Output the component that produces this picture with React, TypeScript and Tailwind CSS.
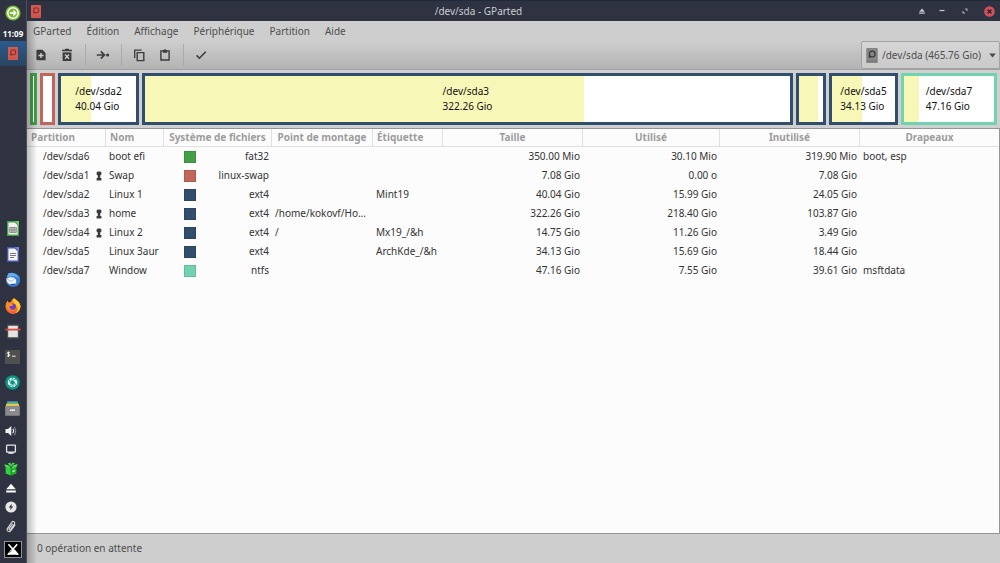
import React from "react";

type Partition = {
  path: string;
  locked?: boolean;
  name: string;
  fs: string;
  color: string;
  mount: string;
  label: string;
  size: string;
  used: string;
  unused: string;
  flags: string;
};

const GREEN = "bg-[#43a047]";
const RED = "bg-[#c1665a]";
const BLUE = "bg-[#314e6c]";
const TEAL = "bg-[#70d2b1]";

const partitions: Partition[] = [
  { path: "/dev/sda6", name: "boot efi", fs: "fat32", color: GREEN, mount: "", label: "", size: "350.00 Mio", used: "30.10 Mio", unused: "319.90 Mio", flags: "boot, esp" },
  { path: "/dev/sda1", locked: true, name: "Swap", fs: "linux-swap", color: RED, mount: "", label: "", size: "7.08 Gio", used: "0.00 o", unused: "7.08 Gio", flags: "" },
  { path: "/dev/sda2", name: "Linux 1", fs: "ext4", color: BLUE, mount: "", label: "Mint19", size: "40.04 Gio", used: "15.99 Gio", unused: "24.05 Gio", flags: "" },
  { path: "/dev/sda3", locked: true, name: "home", fs: "ext4", color: BLUE, mount: "/home/kokovf/Ho...", label: "", size: "322.26 Gio", used: "218.40 Gio", unused: "103.87 Gio", flags: "" },
  { path: "/dev/sda4", locked: true, name: "Linux 2", fs: "ext4", color: BLUE, mount: "/", label: "Mx19_/&h", size: "14.75 Gio", used: "11.26 Gio", unused: "3.49 Gio", flags: "" },
  { path: "/dev/sda5", name: "Linux 3aur", fs: "ext4", color: BLUE, mount: "", label: "ArchKde_/&h", size: "34.13 Gio", used: "15.69 Gio", unused: "18.44 Gio", flags: "" },
  { path: "/dev/sda7", name: "Window", fs: "ntfs", color: TEAL, mount: "", label: "", size: "47.16 Gio", used: "7.55 Gio", unused: "39.61 Gio", flags: "msftdata" },
];

const blocks = [
  { id: "sda6", border: "border-[#43a047]", used: 0, size: "" },
  { id: "sda1", border: "border-[#c1665a]", used: 0, size: "" },
  { id: "sda2", border: "border-[#314e6c]", used: 40, size: "40.04 Gio" },
  { id: "sda3", border: "border-[#314e6c]", used: 68, size: "322.26 Gio" },
  { id: "sda4", border: "border-[#314e6c]", used: 78, size: "" },
  { id: "sda5", border: "border-[#314e6c]", used: 47, size: "34.13 Gio" },
  { id: "sda7", border: "border-[#70d2b1]", used: 17, size: "47.16 Gio" },
];

const DiskIcon = ({ body, ink, w = 10, h = 13 }: { body: string; ink: string; w?: number; h?: number }) => (
  <svg width={w} height={h} viewBox="0 0 10 13" aria-hidden="true">
    <rect width="10" height="13" rx="0.7" fill={body} />
    <circle cx="5.2" cy="5.2" r="2.5" fill="none" stroke={ink} strokeWidth="1.1" />
    <path d="M2.2 8.4V6.2L4.4 8.4Z" fill={ink} />
    <path d="M0 11.4H10" stroke={ink} strokeOpacity="0.2" strokeWidth="0.8" />
  </svg>
);

const Lock = () => (
  <svg width="6" height="10" viewBox="0 0 6 10" fill="#3a3a3a" aria-hidden="true">
    <path d="M1.6 0.5H4.4L5.4 1.5V3.6L4.2 4.6V7H5.4V9.5H0.6V7H1.8V4.6L0.6 3.6V1.5Z" />
  </svg>
);

const SideButton = ({ label, children, className = "flex-1" }: { label: string; children: React.ReactNode; className?: string }) => (
  <button aria-label={label} className={`flex w-full min-h-0 items-center justify-center ${className}`}>
    {children}
  </button>
);

const MenuLogo = () => (
  <svg width="16" height="16" viewBox="0 0 16 16" aria-hidden="true">
    <circle cx="8" cy="8" r="7.6" fill="#79b833" />
    <circle cx="8" cy="8" r="5.2" fill="none" stroke="#fff" strokeWidth="1.5" />
    <path d="M4.8 8H10.6M8.4 5.6L10.8 8L8.4 10.4" fill="none" stroke="#fff" strokeWidth="1.4" />
  </svg>
);

const CalcIcon = () => (
  <svg width="12" height="15" viewBox="0 0 12 15" aria-hidden="true">
    <path d="M0.7 0.7H8L11.3 4V14.3H0.7Z" fill="#f3f3f3" stroke="#43a347" strokeWidth="1.4" />
    <path d="M7.5 0H12V4.5Z" fill="#6fce6b" />
    <path d="M2.7 6.5H9.3V11.5H2.7ZM2.7 8.2H9.3M2.7 9.9H9.3M4.9 6.5V11.5M7.1 6.5V11.5" fill="none" stroke="#777" strokeWidth="0.8" />
  </svg>
);

const WriterIcon = () => (
  <svg width="12" height="15" viewBox="0 0 12 15" aria-hidden="true">
    <path d="M0.7 0.7H8L11.3 4V14.3H0.7Z" fill="#f3f3f3" stroke="#4654b4" strokeWidth="1.4" />
    <path d="M7.5 0H12V4.5Z" fill="#7482df" />
    <path d="M3 6.5H9M3 8.5H9M3 10.5H7" stroke="#777" strokeWidth="1.1" />
  </svg>
);

const MailIcon = () => (
  <svg width="16" height="16" viewBox="0 0 16 16" aria-hidden="true">
    <path d="M3.6 1.2C7.4 -0.2 12.4 1 14.4 4.4C16.4 8.4 14.4 13.4 10 14.6C5.6 15.6 1.4 13 1.2 9L2 5.6Z" fill="#3a7fce" />
    <path d="M3.6 1.2C7.6 0.2 12.6 2 13.6 6.2C11.6 4.4 8.6 3.8 5.4 4.4L1.8 5.6C2 4 2.8 2.4 3.6 1.2Z" fill="#62aeee" />
    <path d="M1.2 6.8C3.6 5.2 7.4 4.6 9.8 6.2C11.6 7.6 11.6 10 10.6 11.8L5 12.4C2.8 11.4 1.4 9.4 1.2 6.8Z" fill="#eef2f6" />
    <path d="M1.8 7.2L6.6 9.2L9.6 6.4" fill="none" stroke="#a5b8cc" strokeWidth="0.8" />
    <path d="M4.6 12.2L10.8 11.4C9.4 13.4 6.8 13.8 4.6 12.2Z" fill="#24579f" />
  </svg>
);

const FirefoxIcon = () => (
  <svg width="16" height="16" viewBox="0 0 16 16" aria-hidden="true">
    <path d="M8.8 0.3C11 1.6 11.6 3 11.8 3.8L13.2 3.4C14.8 5 15.6 7 15.4 9C15 13 11.8 15.7 8 15.7C4 15.7 0.8 12.8 0.6 8.8C0.5 6.4 1.4 4 2.8 2.6L3.4 4.4L6 4C6.4 2.4 7.6 1 8.8 0.3Z" fill="#ff8a1f" />
    <path d="M8.8 0.3C12.4 2.4 15.8 5 15.4 9C15.1 12 13 14.4 10.2 15.3C13 12 12.6 7.4 9.6 5.4C8.2 4 7.8 2 8.8 0.3Z" fill="#ffc928" />
    <path d="M0.7 7.6C1.4 11 4.4 13.2 8 12.8C11 12.4 12.4 10.4 12.2 8.6C13.6 12.6 11 15.7 8 15.7C4 15.7 0.6 12.6 0.7 7.6Z" fill="#f8603a" />
    <circle cx="7.8" cy="8.6" r="3.2" fill="#6f43c0" />
    <path d="M3.6 6.6C5.2 5.6 7 6 8.4 7C7.2 7.2 6.8 8.2 5.4 8.2Z" fill="#ff9a2a" />
  </svg>
);

const ScanIcon = () => (
  <svg width="16" height="15" viewBox="0 0 16 15" aria-hidden="true">
    <rect x="2" y="0.5" width="12" height="14" fill="#4e4e4e" />
    <rect x="3.2" y="1.8" width="9.6" height="11.4" fill="#e4e4e4" />
    <rect x="0.3" y="4.7" width="15.4" height="1.8" fill="#e0483e" />
  </svg>
);

const TerminalIcon = () => (
  <svg width="15" height="14" viewBox="0 0 15 14" aria-hidden="true">
    <rect width="15" height="14" rx="0.8" fill="#505050" />
    <path d="M4.7 2.6C3.4 2 2.2 2.4 2.3 3.3C2.4 4.4 4.8 4 4.8 5.2C4.8 6.2 3.2 6.4 2.1 5.8M3.5 1.7V6.9M7 6.2H10.6" fill="none" stroke="#f2f2f2" strokeWidth="1" />
  </svg>
);

const ShutterIcon = () => (
  <svg width="15" height="15" viewBox="0 0 15 15" aria-hidden="true">
    <circle cx="7.5" cy="7.5" r="7.3" fill="#0b9585" />
    <circle cx="7.5" cy="7.5" r="4.7" fill="#f2f7f6" />
    <path d="M7.5 5.3L9.4 6.4V8.6L7.5 9.7L5.6 8.6V6.4Z" fill="#0b9585" />
    <path d="M7.5 5.3L11 4M9.4 6.4L10.6 10.6M9.4 8.6L7 12.2M7.5 9.7L4 11M5.6 8.6L4.2 4.4M5.6 6.4L8 2.8" stroke="#0b9585" strokeWidth="0.8" />
  </svg>
);

const FilesIcon = () => (
  <svg width="15" height="15" viewBox="0 0 15 15" aria-hidden="true">
    <rect x="2.2" y="0.3" width="10.6" height="3" fill="#4c94d8" />
    <rect x="1.6" y="1.7" width="11.8" height="3" fill="#61b960" />
    <rect x="1" y="3.1" width="13" height="3" fill="#f5cf45" />
    <rect x="0.2" y="4.8" width="14.6" height="10" rx="0.6" fill="#8b8b8b" />
    <rect x="5" y="8.4" width="5" height="1.5" fill="#f0f0f0" />
  </svg>
);

const VolumeIcon = () => (
  <svg width="12" height="12" viewBox="0 0 12 12" aria-hidden="true">
    <path d="M0.5 4H3L6.3 1V11L3 8H0.5Z" fill="#efefef" />
    <path d="M7.7 3.8C8.8 5 8.8 7 7.7 8.2" fill="none" stroke="#efefef" strokeWidth="1.1" />
    <path d="M9 1.9C11.3 4 11.3 8 9 10.1" fill="none" stroke="#80838c" strokeWidth="1.1" />
  </svg>
);

const DisplayIcon = () => (
  <svg width="12" height="11" viewBox="0 0 12 11" aria-hidden="true">
    <rect x="1.6" y="1.2" width="8.8" height="7" rx="0.6" fill="none" stroke="#e8e8e8" strokeWidth="1.3" />
    <path d="M3.4 8H8.6V9.8H3.4Z" fill="#e8e8e8" />
  </svg>
);

const PackageIcon = () => (
  <svg width="14" height="14" viewBox="0 0 14 14" aria-hidden="true">
    <path d="M1.6 5L7 6.4V13.6L1.6 11.6Z" fill="#33cf3d" />
    <path d="M12.4 5L7 6.4V13.6L12.4 11.6Z" fill="#1fb32c" />
    <path d="M1.6 5L0.3 2.2L4.6 3.4L7 6.4L9.4 3.2L13.7 2L12.4 5L7 6.8Z" fill="#50e556" />
    <path d="M3.6 1.4L6.4 0.6L7 2.6L8.8 0.6L11.2 1.6L8.6 3L7 5.2L5.2 3Z" fill="#3fd648" />
    <path d="M7 6.4V13.6" stroke="#127a1d" strokeWidth="0.7" />
    <path d="M8.5 9.7L11 8.6" stroke="#d6ffd8" strokeWidth="1.1" />
  </svg>
);

const EjectIcon = ({ size = 10, color = "#fff" }: { size?: number; color?: string }) => (
  <svg width={size} height={size} viewBox="0 0 10 10" fill={color} aria-hidden="true">
    <path d="M5 0.8L9.8 6.2H0.2ZM0.2 7.4H9.8V9.4H0.2Z" />
  </svg>
);

const PowerIcon = () => (
  <svg width="12" height="12" viewBox="0 0 12 12" aria-hidden="true">
    <circle cx="6" cy="6" r="5.6" fill="#e6e6e6" />
    <path d="M6.8 2.8L3.8 6.6H5.6L5.1 9.2L8.2 5.4H6.4Z" fill="#2d3240" />
  </svg>
);

const ClipIcon = () => (
  <svg width="12" height="13" viewBox="0 0 12 13" fill="none" stroke="#dedede" strokeWidth="1.1" aria-hidden="true">
    <path d="M10.2 4.6L5.8 10.8C4.4 12.8 1.2 11 2.4 8.6L6.8 2.2C7.8 0.6 10.4 1.8 9.5 3.8L5.6 9.5C4.8 10.5 3.6 9.6 4.2 8.6L7.5 3.8" />
  </svg>
);

const XIcon = () => (
  <svg width="18" height="17" viewBox="0 0 18 17" aria-hidden="true">
    <rect x="0.5" y="0.5" width="17" height="16" fill="#000" stroke="#8f929a" />
    <path d="M3 13.8L6.4 9.4L8.8 7.2L11.6 9.4L15 13.8Z" fill="#fff" />
    <path d="M4.4 3.2L13.8 13.6M13.2 3.2L4.4 13.6" stroke="#fff" strokeWidth="1.6" />
    <path d="M5 11.6L8 9.6" stroke="#555" strokeWidth="0.7" />
  </svg>
);

const Sidebar = () => (
  <aside className="flex w-[26px] shrink-0 flex-col items-center bg-[#2f3341] text-white">
    <SideButton label="Menu" className="h-[25px]"><MenuLogo /></SideButton>
    <time className="h-4 text-center text-[8px] leading-[18px] font-bold">11:09</time>
    <SideButton label="GParted" className="h-[25px] bg-linear-to-b from-[#2a5a8e] to-[#2b4560]">
      <DiskIcon body="#d25a52" ink="#8a2f2d" />
    </SideButton>
    <nav aria-label="Applications" className="mt-auto flex h-[205px] w-full flex-col pr-px">
      <SideButton label="Calc"><CalcIcon /></SideButton>
      <SideButton label="Writer"><WriterIcon /></SideButton>
      <SideButton label="Thunderbird"><MailIcon /></SideButton>
      <SideButton label="Firefox"><FirefoxIcon /></SideButton>
      <SideButton label="Scanner"><ScanIcon /></SideButton>
      <SideButton label="Terminal"><TerminalIcon /></SideButton>
      <SideButton label="Capture"><ShutterIcon /></SideButton>
      <SideButton label="Fichiers"><FilesIcon /></SideButton>
    </nav>
    <div className="flex h-[115px] w-full flex-col pr-1">
      <SideButton label="Volume"><VolumeIcon /></SideButton>
      <SideButton label="Écran"><DisplayIcon /></SideButton>
      <SideButton label="Paquets"><PackageIcon /></SideButton>
      <SideButton label="Éjecter"><EjectIcon /></SideButton>
      <SideButton label="Énergie"><PowerIcon /></SideButton>
      <SideButton label="Presse-papiers"><ClipIcon /></SideButton>
    </div>
    <SideButton label="Session" className="h-[27px] pr-px"><XIcon /></SideButton>
  </aside>
);

const TitleBar = () => (
  <header className="flex h-[21px] shrink-0 items-center border-t border-[#1f2b38] bg-[#2f3341] text-[#c9ccd3]">
    <span className="flex w-[18px] justify-center"><DiskIcon body="#d25a52" ink="#8a2f2d" /></span>
    <h1 className="flex-1 text-center">/dev/sda - GParted</h1>
    <button aria-label="Épingler" className="flex w-5 justify-center"><EjectIcon size={6} color="#c3c6ce" /></button>
    <button aria-label="Réduire" className="flex w-5 justify-center">
      <svg width="6" height="6" viewBox="0 0 6 6"><path d="M0.5 2.5H5.5" stroke="#c3c6ce" strokeWidth="1.2" /></svg>
    </button>
    <button aria-label="Restaurer" className="flex w-[26px] justify-center">
      <svg width="6" height="6" viewBox="0 0 6 6" fill="#a9adb8">
        <path d="M2.6 0.5H5.5V3.4ZM0.5 2.6V5.5H3.4Z" />
      </svg>
    </button>
    <button aria-label="Fermer" className="flex w-[22px] justify-center">
      <svg width="11" height="11" viewBox="0 0 11 11">
        <circle cx="5.5" cy="5.5" r="5.3" fill="#d2505c" />
        <path d="M3.6 3.6L7.4 7.4M7.4 3.6L3.6 7.4" stroke="#3a2530" strokeWidth="1.5" />
      </svg>
    </button>
  </header>
);

const ToolButton = ({ label, children }: { label: string; children: React.ReactNode }) => (
  <button aria-label={label} className="flex w-[26px] items-center justify-center">
    <svg width="14" height="14" viewBox="0 0 14 14" fill="none" stroke="#3c3c3c" aria-hidden="true">{children}</svg>
  </button>
);

const Separator = () => <span className="my-[3px] mr-1 ml-[5px] w-px bg-[#aaaaaa]" />;

const Toolbar = () => (
  <div className="flex h-[28px] shrink-0 bg-linear-to-b from-[#cecece] to-[#b3b3b3] pl-px">
    <ToolButton label="Nouveau">
      <path d="M3.4 1.8H8.4L11.6 5V12.2H3.4Q2.4 12.2 2.4 11.2V2.8Q2.4 1.8 3.4 1.8Z" fill="#3c3c3c" stroke="none" />
      <path d="M7 5V10M4.5 7.5H9.5" stroke="#cfcfcf" strokeWidth="1.4" />
    </ToolButton>
    <ToolButton label="Supprimer">
      <path d="M2 2.6H12M5 1.6H9" strokeWidth="1.5" />
      <path d="M2.6 4.4H11.4V13H2.6Z" fill="#3c3c3c" stroke="none" />
      <path d="M5 6.5L9 10.7M9 6.5L5 10.7" stroke="#cfcfcf" strokeWidth="1.3" />
    </ToolButton>
    <Separator />
    <ToolButton label="Redimensionner">
      <path d="M0.8 7H8M4.8 3.4L8.4 7L4.8 10.6" strokeWidth="1.7" />
      <circle cx="11.6" cy="7" r="1.6" fill="#3c3c3c" stroke="none" />
    </ToolButton>
    <Separator />
    <ToolButton label="Copier">
      <path d="M2.7 10V2.2H9.6" strokeWidth="1.3" />
      <path d="M5.2 4.6H11.8V12.6H5.2Z" strokeWidth="1.4" />
    </ToolButton>
    <ToolButton label="Coller">
      <path d="M2.9 2.9H11.1V12H2.9Z" strokeWidth="1.4" />
      <path d="M4.8 2H5.8A1.3 1.3 0 0 1 8.2 2H9.2V4.8H4.8Z" fill="#3c3c3c" stroke="none" />
    </ToolButton>
    <Separator />
    <ToolButton label="Appliquer">
      <path d="M2.6 7.4L5.4 10.2L11.8 3.8" strokeWidth="1.6" />
    </ToolButton>
    <label className="relative ml-auto flex items-center rounded-[2px] border border-[#a3a3a3] bg-linear-to-b from-[#d6d6d6] to-[#cacaca] pl-1">
      <DiskIcon body="#858585" ink="#3c3c3c" w={12} h={15} />
      <select aria-label="Périphérique" className="h-full w-[121px] appearance-none bg-transparent pl-1 text-[#4d4d4d] outline-none">
        <option>/dev/sda (465.76 Gio)</option>
      </select>
      <svg className="pointer-events-none absolute right-[3px]" width="7" height="5" viewBox="0 0 7 5">
        <path d="M0.2 0.6H6.8L3.5 4.4Z" fill="#4a4a4a" />
      </svg>
    </label>
  </div>
);

const DiskMap = () => (
  <div className="grid h-[59px] shrink-0 grid-cols-[7fr_15fr_81fr_651fr_30fr_69fr_96fr] gap-x-[3px] border-t border-[#a0a0a0] bg-[#d0d0d0] py-[3px] pr-[3px] pl-[3px]">
    {blocks.map((b) => (
      <div key={b.id} className={`relative flex items-center justify-center border-[3px] bg-white ${b.border}`}>
        <div className="absolute inset-y-0 left-0 bg-[#f7f7b7]" style={{ width: `${b.used}%` }} />
        {b.size && (
          <p className="relative leading-[15px] text-[#111111]">
            /dev/{b.id}
            <br />
            {b.size}
          </p>
        )}
      </div>
    ))}
  </div>
);

const columns = [
  { title: "Partition", width: "w-[79px]", align: "text-left pl-1" },
  { title: "Nom", width: "w-[58px]", align: "text-left pl-1" },
  { title: "Système de fichiers", width: "w-[108px]", align: "text-center" },
  { title: "Point de montage", width: "w-[101px]", align: "text-center" },
  { title: "Étiquette", width: "w-[70px]", align: "text-left pl-1" },
  { title: "Taille", width: "w-[140px]", align: "text-center" },
  { title: "Utilisé", width: "w-[137px]", align: "text-center" },
  { title: "Inutilisé", width: "w-[140px]", align: "text-center" },
  { title: "Drapeaux", width: "w-auto", align: "text-center" },
];

const PartitionTable = () => (
  <main className="min-h-0 flex-1 border-y border-r border-[#959595] bg-[#fcfcfc]">
    <table className="w-full table-fixed border-separate border-spacing-0 whitespace-nowrap">
      <thead>
        <tr className="h-[18px]">
          {columns.map((c) => (
            <th key={c.title} scope="col" className={`${c.width} ${c.align} border-r border-b border-[#e0e0e0] p-0 font-bold text-[#9c9c9c] last:border-r-0`}>
              {c.title}
            </th>
          ))}
        </tr>
      </thead>
      <tbody className="text-[#333333]">
        {partitions.map((p) => (
          <tr key={p.path} className="h-[19px]">
            <td className="p-0 pl-4">
              <span className="flex items-center justify-between pr-1">{p.path}{p.locked && <Lock />}</span>
            </td>
            <td className="p-0 pl-[3px]">{p.name}</td>
            <td className="p-0 pr-[3px] pl-5">
              <span className="flex items-center justify-between">
                <span className={`h-3 w-3 border border-black/10 ${p.color}`} />
                {p.fs}
              </span>
            </td>
            <td className="p-0 pl-[3px]">{p.mount}</td>
            <td className="p-0 pl-[3px]">{p.label}</td>
            <td className="p-0 pr-[3px] text-right">{p.size}</td>
            <td className="p-0 pr-[3px] text-right">{p.used}</td>
            <td className="p-0 pr-[3px] text-right">{p.unused}</td>
            <td className="p-0 pl-[3px]">{p.flags}</td>
          </tr>
        ))}
      </tbody>
    </table>
  </main>
);

const menus = ["GParted", "Édition", "Affichage", "Périphérique", "Partition", "Aide"];

export default function App() {
  return (
    <div className="flex h-screen overflow-hidden bg-[#2f3341] font-['Noto_Sans',sans-serif] text-[10px] leading-[15px]">
      <Sidebar />
      <div className="flex min-w-0 flex-1 flex-col border-l border-[#4d5059]">
        <TitleBar />
        <div className="relative flex min-h-0 flex-1 flex-col bg-[#cecece]">
          <nav aria-label="Menu principal" className="flex h-5 shrink-0 items-center gap-[15px] pl-1.5 text-[#4d4d4d]">
            {menus.map((m) => (
              <button key={m}>{m}</button>
            ))}
          </nav>
          <Toolbar />
          <DiskMap />
          <PartitionTable />
          <footer className="flex h-[29px] shrink-0 items-center pl-2.5 text-[#4d4d4d]">0 opération en attente</footer>
          <div className="pointer-events-none absolute inset-y-0 left-0 w-2.5 bg-linear-to-r from-black/25 to-transparent" />
        </div>
      </div>
    </div>
  );
}
